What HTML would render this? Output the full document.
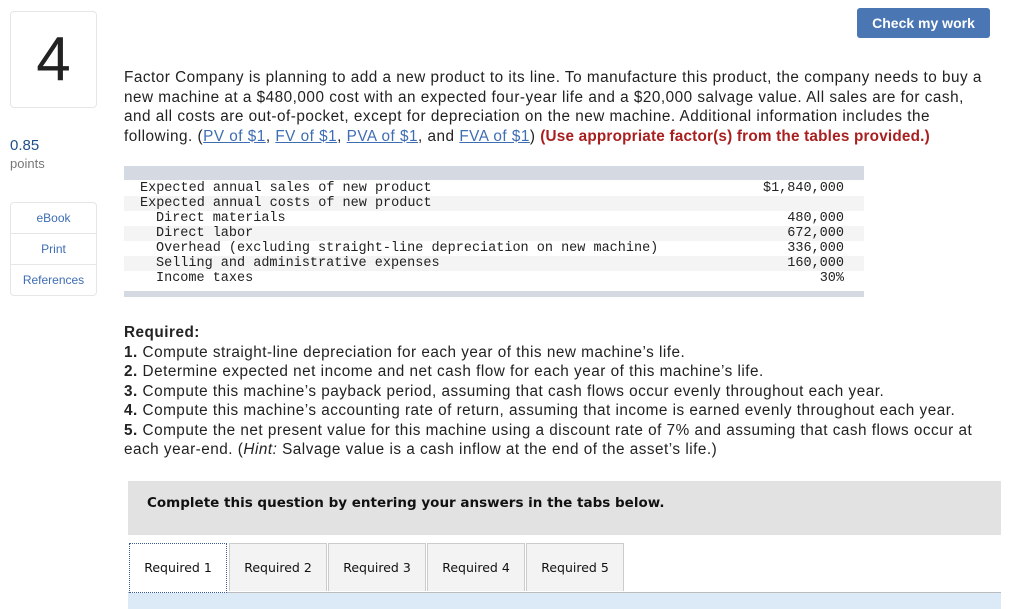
<!DOCTYPE html>
<html><head><meta charset="utf-8"><style>
body{margin:0;width:1024px;height:608px;overflow:hidden;background:#fff;font-family:"Liberation Sans",sans-serif;color:#222;position:relative}
.a{position:absolute}
.num{left:10px;top:11px;width:85px;height:95px;border:1px solid #e6e6e6;border-radius:4px;font-size:62px;text-align:center;line-height:95px;color:#222}
.pts{left:10px;top:137px;font-size:15px;color:#1f4f8a}
.pl{left:10px;top:156px;font-size:13px;color:#777}
.side{left:10px;top:202px;width:85px;border:1px solid #e6e6e6;border-radius:4px}
.side div{height:30px;line-height:30px;text-align:center;font-size:12px;color:#3e6db3;border-top:1px solid #e6e6e6}
.side div:first-child{border-top:0}
.btn{left:857px;top:8px;width:133px;height:30px;background:#4a76b3;border-radius:3px;color:#fff;font-weight:bold;font-size:14px;text-align:center;line-height:30px}
.p{left:124px;font-size:15.3px;line-height:19.5px;white-space:nowrap;letter-spacing:0.5px}
.p a{color:#3e6db3;text-decoration:underline}
.red{color:#a91f1f;font-weight:bold;letter-spacing:0.2px}
.tbl{left:124px;top:166px;width:740px}
.bar{height:14px;background:#d5d9e1}
.row{height:15px;font-family:"Liberation Mono",monospace;font-size:13.5px;line-height:15px;position:relative;color:#222}
.row span{position:absolute;left:16px}
.row span.i{left:32px}
.row b{position:absolute;right:20px;font-weight:normal}
.comp{left:128px;top:481px;width:873px;height:54px;background:#e2e2e2;font-family:"DejaVu Sans",sans-serif;font-weight:bold;font-size:13.5px;line-height:44px;text-indent:19px;color:#111}
.tab{top:543px;height:47px;width:96px;background:#f3f3f3;border:1px solid #ccc;border-bottom:0;font-family:"DejaVu Sans",sans-serif;font-size:12.5px;text-align:center;line-height:48px;color:#111}
.strip{left:128px;top:592px;width:873px;height:16px;background:#dce9f6;border-top:1px solid #bbb}
</style></head><body>
<div class="a num">4</div>
<div class="a pts">0.85</div>
<div class="a pl">points</div>
<div class="a side"><div>eBook</div><div>Print</div><div>References</div></div>
<div class="a btn">Check my work</div>
<div class="a p" style="top:68px">Factor Company is planning to add a new product to its line. To manufacture this product, the company needs to buy a</div>
<div class="a p" style="top:87.5px">new machine at a $480,000 cost with an expected four-year life and a $20,000 salvage value. All sales are for cash,</div>
<div class="a p" style="top:107px">and all costs are out-of-pocket, except for depreciation on the new machine. Additional information includes the</div>
<div class="a p" style="top:126.5px">following. (<a>PV of $1</a>, <a>FV of $1</a>, <a>PVA of $1</a>, and <a>FVA of $1</a>) <span class="red">(Use appropriate factor(s) from the tables provided.)</span></div>
<div class="a tbl">
<div class="bar"></div>
<div style="height:1px"></div>
<div>
<div class="row" style="background:#fff"><span>Expected annual sales of new product</span><b>$1,840,000</b></div>
<div class="row" style="background:#f4f4f4"><span>Expected annual costs of new product</span></div>
<div class="row" style="background:#fff"><span class="i">Direct materials</span><b>480,000</b></div>
<div class="row" style="background:#f4f4f4"><span class="i">Direct labor</span><b>672,000</b></div>
<div class="row" style="background:#fff"><span class="i">Overhead (excluding straight-line depreciation on new machine)</span><b>336,000</b></div>
<div class="row" style="background:#f4f4f4"><span class="i">Selling and administrative expenses</span><b>160,000</b></div>
<div class="row" style="background:#fff"><span class="i">Income taxes</span><b>30%</b></div>
</div>
<div style="height:5px"></div>
<div class="bar" style="height:6px"></div>
</div>
<div class="a p" style="top:323px"><b>Required:</b></div>
<div class="a p" style="top:342.5px"><b>1.</b> Compute straight-line depreciation for each year of this new machine’s life.</div>
<div class="a p" style="top:362px"><b>2.</b> Determine expected net income and net cash flow for each year of this machine’s life.</div>
<div class="a p" style="top:381.5px"><b>3.</b> Compute this machine’s payback period, assuming that cash flows occur evenly throughout each year.</div>
<div class="a p" style="top:401px"><b>4.</b> Compute this machine’s accounting rate of return, assuming that income is earned evenly throughout each year.</div>
<div class="a p" style="top:420.5px"><b>5.</b> Compute the net present value for this machine using a discount rate of 7% and assuming that cash flows occur at</div>
<div class="a p" style="top:440px">each year-end. (<i>Hint:</i> Salvage value is a cash inflow at the end of the asset’s life.)</div>
<div class="a comp">Complete this question by entering your answers in the tabs below.</div>
<div class="a strip"></div>
<div class="a tab" style="left:129px;background:#fff;border:1px dotted #3a5a9a;height:48px">Required 1</div>
<div class="a tab" style="left:229px">Required 2</div>
<div class="a tab" style="left:328px">Required 3</div>
<div class="a tab" style="left:427px">Required 4</div>
<div class="a tab" style="left:526px">Required 5</div>
</body></html>
